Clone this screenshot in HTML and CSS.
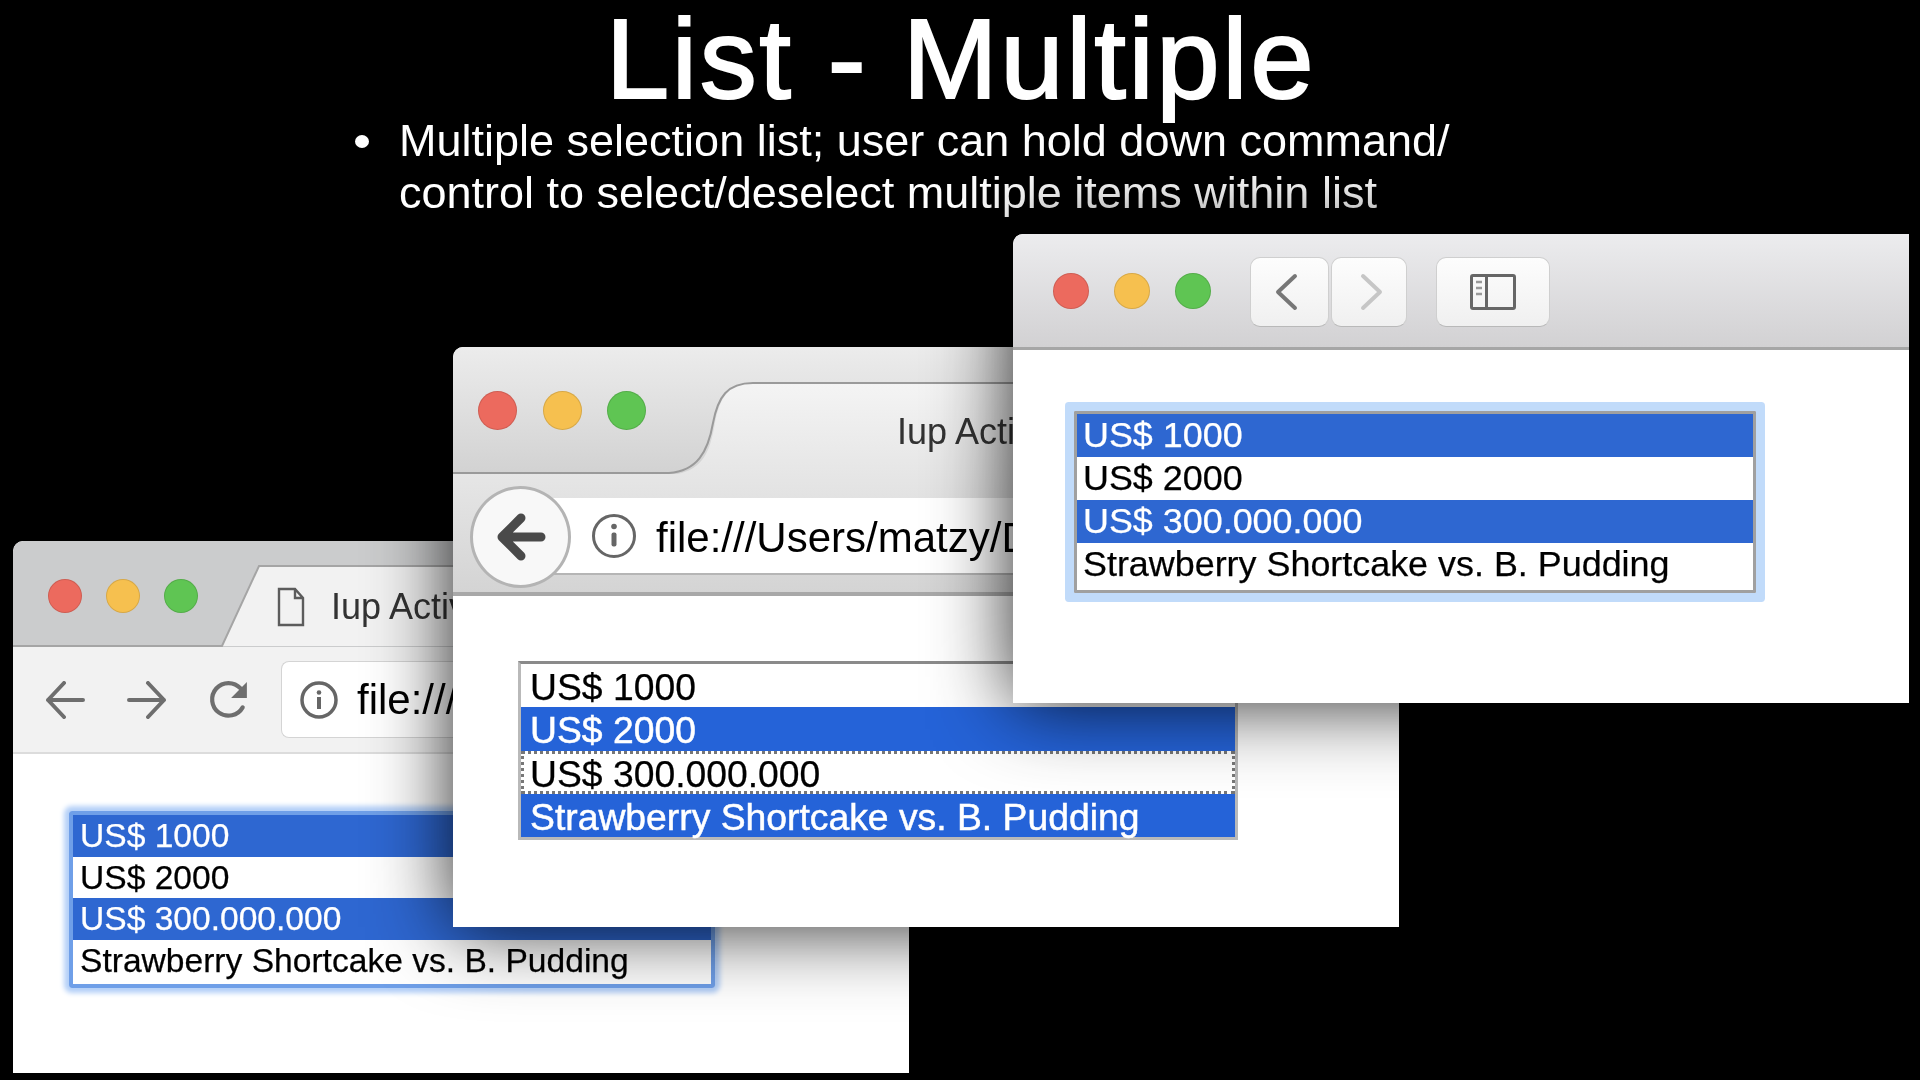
FILE: index.html
```html
<!DOCTYPE html>
<html lang="en">
<head>
<meta charset="utf-8">
<title>List - Multiple</title>
<link rel="stylesheet" href="styles.css">
</head>
<body>
<main class="slide">
  <h1 class="title">List - Multiple</h1>
  <ul class="bullets">
    <li class="bullet-item">Multiple selection list; user can hold down command/<br>control to select/deselect multiple items within list</li>
  </ul>

  <section class="win win-a">
    <div class="a-titlebar">
      <svg class="a-tab-shape" width="896" height="106" viewBox="0 0 896 106"><path d="M209 105L246 25H896V105Z" fill="#f2f2f2"/><path d="M0 105H209L246 25H896" fill="none" stroke="#a5a5a5" stroke-width="2"/></svg>
      <div class="lights lights-a"><span class="light red"></span><span class="light yellow"></span><span class="light green"></span></div>
      <svg class="page-icon" width="28" height="40" viewBox="0 0 28 40"><path d="M2 2H18L26 11V38H2Z M18 2V11H26" fill="none" stroke="#5c5c5c" stroke-width="2.4"/></svg>
      <span class="tab-label tab-label-a">Iup Active</span>
    </div>
    <div class="a-toolbar">
      <svg width="40" height="38" viewBox="0 0 40 38"><path d="M38 19H3M19 2L3 19L19 36" fill="none" stroke="#6e6e6e" stroke-width="4" stroke-linecap="round" stroke-linejoin="round"/></svg>
      <svg width="40" height="38" viewBox="0 0 40 38"><path d="M2 19H37M21 2L37 19L21 36" fill="none" stroke="#6e6e6e" stroke-width="4" stroke-linecap="round" stroke-linejoin="round"/></svg>
      <svg class="a-reload" width="40" height="40" viewBox="0 0 38 38"><path d="M32 26A15.500 15.500 0 1 1 30 8" fill="none" stroke="#6e6e6e" stroke-width="4" stroke-linecap="round"/><path d="M36 2V17H21Z" fill="#6e6e6e"/></svg>
      <div class="a-address">
        <svg width="38" height="38" viewBox="0 0 38 38"><circle cx="19" cy="19" r="17" fill="none" stroke="#666" stroke-width="3.500"/><circle cx="19" cy="11.500" r="2.300" fill="#666"/><rect x="17" y="16" width="4" height="12" fill="#666"/></svg>
        <span class="url url-a">file:///Users/matzy/Desktop</span>
      </div>
    </div>
    <div class="content content-a">
      <div class="listbox listbox-a">
        <div class="opt opt-a sel">US$ 1000</div>
        <div class="opt opt-a">US$ 2000</div>
        <div class="opt opt-a sel">US$ 300.000.000</div>
        <div class="opt opt-a">Strawberry Shortcake vs. B. Pudding</div>
      </div>
    </div>
  </section>

  <section class="win win-b">
    <div class="b-titlebar">
      <svg class="b-tab-shape" width="946" height="127" viewBox="0 0 946 127"><defs><linearGradient id="tabfill" x1="0" y1="0" x2="0" y2="1"><stop offset="0" stop-color="#f4f4f4"/><stop offset="1" stop-color="#e6e6e6"/></linearGradient></defs><path d="M224 127C250 122 257 105 262 76C267 50 276 36 300 36H946V127Z" fill="url(#tabfill)"/><path d="M0 126H216C244 124 255 105 260 76C265 50 274 36 300 36H946" fill="none" stroke="#9a9a9a" stroke-width="2"/></svg>
      <div class="lights lights-b"><span class="light red"></span><span class="light yellow"></span><span class="light green"></span></div>
      <span class="tab-label tab-label-b">Iup Active</span>
    </div>
    <div class="b-toolbar">
      <div class="b-address">
        <svg width="46" height="46" viewBox="0 0 46 46"><circle cx="23" cy="23" r="20.500" fill="none" stroke="#666" stroke-width="3"/><circle cx="23" cy="13.500" r="2.800" fill="#666"/><rect x="20.500" y="19.500" width="5" height="14" rx="2" fill="#666"/></svg>
        <span class="url url-b">file:///Users/matzy/Desktop</span>
      </div>
      <div class="b-back">
        <svg width="50" height="50" viewBox="0 0 50 50"><path d="M45 25H10M25 6L6 25L25 44" fill="none" stroke="#4a4a4a" stroke-width="9" stroke-linecap="round" stroke-linejoin="round"/></svg>
      </div>
    </div>
    <div class="content content-b">
      <div class="listbox listbox-b">
        <div class="opt opt-b">US$ 1000</div>
        <div class="opt opt-b sel-b">US$ 2000</div>
        <div class="opt opt-b dotted">US$ 300.000.000</div>
        <div class="opt opt-b sel-b">Strawberry Shortcake vs. B. Pudding</div>
      </div>
    </div>
  </section>

  <section class="win win-c">
    <div class="c-titlebar">
      <div class="lights lights-c"><span class="light red"></span><span class="light yellow"></span><span class="light green"></span></div>
      <div class="c-button c-nav">
        <svg class="c-chevron" width="24" height="38" viewBox="0 0 24 38"><path d="M21 3L4 19L21 35" fill="none" stroke="#777" stroke-width="4" stroke-linecap="round" stroke-linejoin="round"/></svg>
      </div>
      <div class="c-button c-nav c-forward">
        <svg class="c-chevron-next" width="24" height="38" viewBox="0 0 24 38"><path d="M3 3L20 19L3 35" fill="none" stroke="#c6c6c6" stroke-width="4" stroke-linecap="round" stroke-linejoin="round"/></svg>
      </div>
      <div class="c-button c-side">
        <svg width="46" height="36" viewBox="0 0 46 36"><rect x="1.500" y="1.500" width="43" height="33" rx="1.500" fill="none" stroke="#666" stroke-width="3"/><rect x="15" y="2" width="3" height="32" fill="#666"/><path d="M6 8H12M6 14H12M6 20H12" stroke="#999" stroke-width="2.500"/></svg>
      </div>
    </div>
    <div class="content content-c">
      <div class="listbox listbox-c">
        <div class="opt opt-c sel-c">US$ 1000</div>
        <div class="opt opt-c">US$ 2000</div>
        <div class="opt opt-c sel-c">US$ 300.000.000</div>
        <div class="opt opt-c">Strawberry Shortcake vs. B. Pudding</div>
      </div>
    </div>
  </section>
</main>
</body>
</html>
```
FILE: styles.css
```css
* { box-sizing: border-box; }
html, body { margin: 0; padding: 0; background: #000; }
body { font-family: "Liberation Sans", Arial, sans-serif; }
.slide { position: relative; width: 1920px; height: 1080px; overflow: hidden; background: #000; color: #fff; }

.title { margin: 0 0 -3px; padding-left: 2px; font-size: 114px; line-height: 118px; letter-spacing: 2.600px; font-weight: 400; text-align: center; -webkit-text-stroke: 2px #fff; filter: blur(.4px); }
.bullets { margin: 0; padding: 0 0 0 399px; list-style: none; }
.bullet-item { position: relative; font-size: 45px; line-height: 52px; white-space: nowrap; filter: blur(.4px); }
.bullet-item::before { content: ""; position: absolute; left: -44px; top: 20px; width: 14px; height: 13px; border-radius: 50%; background: #fff; }

.win { position: absolute; display: flex; flex-direction: column; overflow: hidden; background: #fff; border-radius: 10px 0 0 0; color: #000; }
.win-a { left: 13px; top: 541px; width: 896px; height: 532px; }
.win-b { left: 453px; top: 347px; width: 946px; height: 580px; box-shadow: 0 0 80px rgba(0,0,0,.85); overflow: visible; }
.win-c { left: 1013px; top: 234px; width: 896px; height: 469px; box-shadow: 0 0 80px rgba(0,0,0,.85); overflow: visible; }

.lights { display: flex; position: relative; flex: none; }
.light { display: block; border-radius: 50%; border: 1px solid rgba(0,0,0,.12); }
.red { background: #ec6a5e; }
.yellow { background: #f6c04f; }
.green { background: #5fc553; }
.lights-a { gap: 24px; margin-left: 35px; }
.lights-a .light { width: 34px; height: 34px; }
.lights-b { gap: 25.500px; margin-left: 25px; }
.lights-b .light { width: 39px; height: 39px; }
.lights-c { gap: 25px; margin-left: 40px; }
.lights-c .light { width: 36px; height: 36px; }

.a-titlebar { position: relative; display: flex; align-items: center; flex: none; height: 106px; padding-top: 4px; background: #cbcccd; border-radius: 10px 0 0 0; }
.a-tab-shape { position: absolute; left: 0; top: 0; }
.page-icon { position: relative; margin-left: 79px; margin-top: 22px; flex: none; }
.tab-label { position: relative; white-space: nowrap; color: #333; filter: blur(.4px); }
.tab-label-a { margin-left: 26px; margin-top: 22px; font-size: 36px; }
.a-toolbar { display: flex; align-items: center; gap: 42px; flex: none; height: 107px; padding: 0 0 0 32px; background: #f2f2f2; border-bottom: 2px solid #dcdcdc; }
.a-toolbar > svg { flex: none; }
.a-toolbar > .a-reload { margin-right: -10px; }
.a-address { display: flex; align-items: center; gap: 19px; flex: 1; height: 77px; padding-left: 18px; background: #fff; border: 1px solid #d4d4d4; border-right: 0; border-radius: 8px 0 0 8px; }
.url { white-space: nowrap; color: #000; font-size: 42px; filter: blur(.4px); }

.content { flex: 1; background: #fff; border-radius: 0; }
.content-a { padding: 57px 0 0 56px; }
.content-b { padding: 65px 0 0 65px; }
.content-c { padding: 61px 0 0 61px; }

.listbox { display: flex; flex-direction: column; }
.opt { white-space: nowrap; filter: blur(.35px); -webkit-text-stroke: .25px currentColor; }
.listbox-a { width: 646px; height: 177px; border: 4px solid #6f9fe8; border-radius: 3px; box-shadow: 0 0 5px 5px #b4d0f8; }
.opt-a { height: 41.500px; line-height: 41px; padding-left: 7px; font-size: 33.600px; }
.sel { background: #2e67d1; color: #fff; }
.listbox-b { width: 720px; height: 179px; border: 3px solid #b9b9b9; border-top-color: #8a8a8a; }
.opt-b { height: 43.250px; line-height: 46px; padding-left: 9px; font-size: 37.300px; }
.sel-b { background: #2563d8; color: #fff; -webkit-text-stroke: .5px #fff; }
.dotted { outline: 3px dotted #777; outline-offset: -3px; }
.listbox-c { width: 682px; height: 182px; border: 3px solid #a0a0a0; box-shadow: 0 0 0 9px #c1dbfa; border-radius: 1px; }
.opt-c { height: 43px; line-height: 43px; padding-left: 6px; font-size: 35.900px; }
.sel-c { background: #2e67d1; color: #fff; }

.b-titlebar { position: relative; display: flex; align-items: center; flex: none; height: 127px; background: linear-gradient(#ececec, #d2d2d2); border-radius: 10px 0 0 0; }
.b-tab-shape { position: absolute; left: 0; top: 0; }
.tab-label-b { margin-left: 251px; margin-top: 42px; font-size: 36px; }
.b-toolbar { position: relative; flex: none; height: 122px; padding: 24px 0 18px; background: linear-gradient(#e6e6e6, #d4d4d4); border-bottom: 4px solid #a8a8a8; }
.b-address { display: flex; align-items: center; gap: 19px; height: 77px; margin-left: 68px; padding-left: 70px; background: #fff; border-bottom: 2px solid #b5b5b5; overflow: hidden; }
.b-address > svg { flex: none; }
.url-b { font-size: 42px; margin-top: 4px; }
.b-back { position: absolute; left: 17px; top: 12px; display: flex; align-items: center; justify-content: center; width: 101px; height: 102px; border-radius: 50%; background: #f8f8f8; border: 3px solid #b4b4b4; }

.c-titlebar { display: flex; align-items: center; flex: none; height: 116px; background: linear-gradient(#ececee, #d2d1d3); border-bottom: 3px solid #a6a6a6; border-radius: 10px 0 0 0; }
.c-button { display: flex; align-items: center; justify-content: center; height: 70px; margin-top: 2px; background: linear-gradient(#fdfdfd, #f0f0f0); border: 1px solid #cfcfcf; border-bottom-color: #b9b9b9; border-radius: 10px; }
.c-nav { width: 79px; margin-left: 38.500px; }
.c-chevron { margin-right: 6px; }
.c-chevron-next { margin-left: 6px; }
.c-forward { width: 76px; margin-left: 2px; }
.c-side { width: 114px; margin-left: 29px; }
```
